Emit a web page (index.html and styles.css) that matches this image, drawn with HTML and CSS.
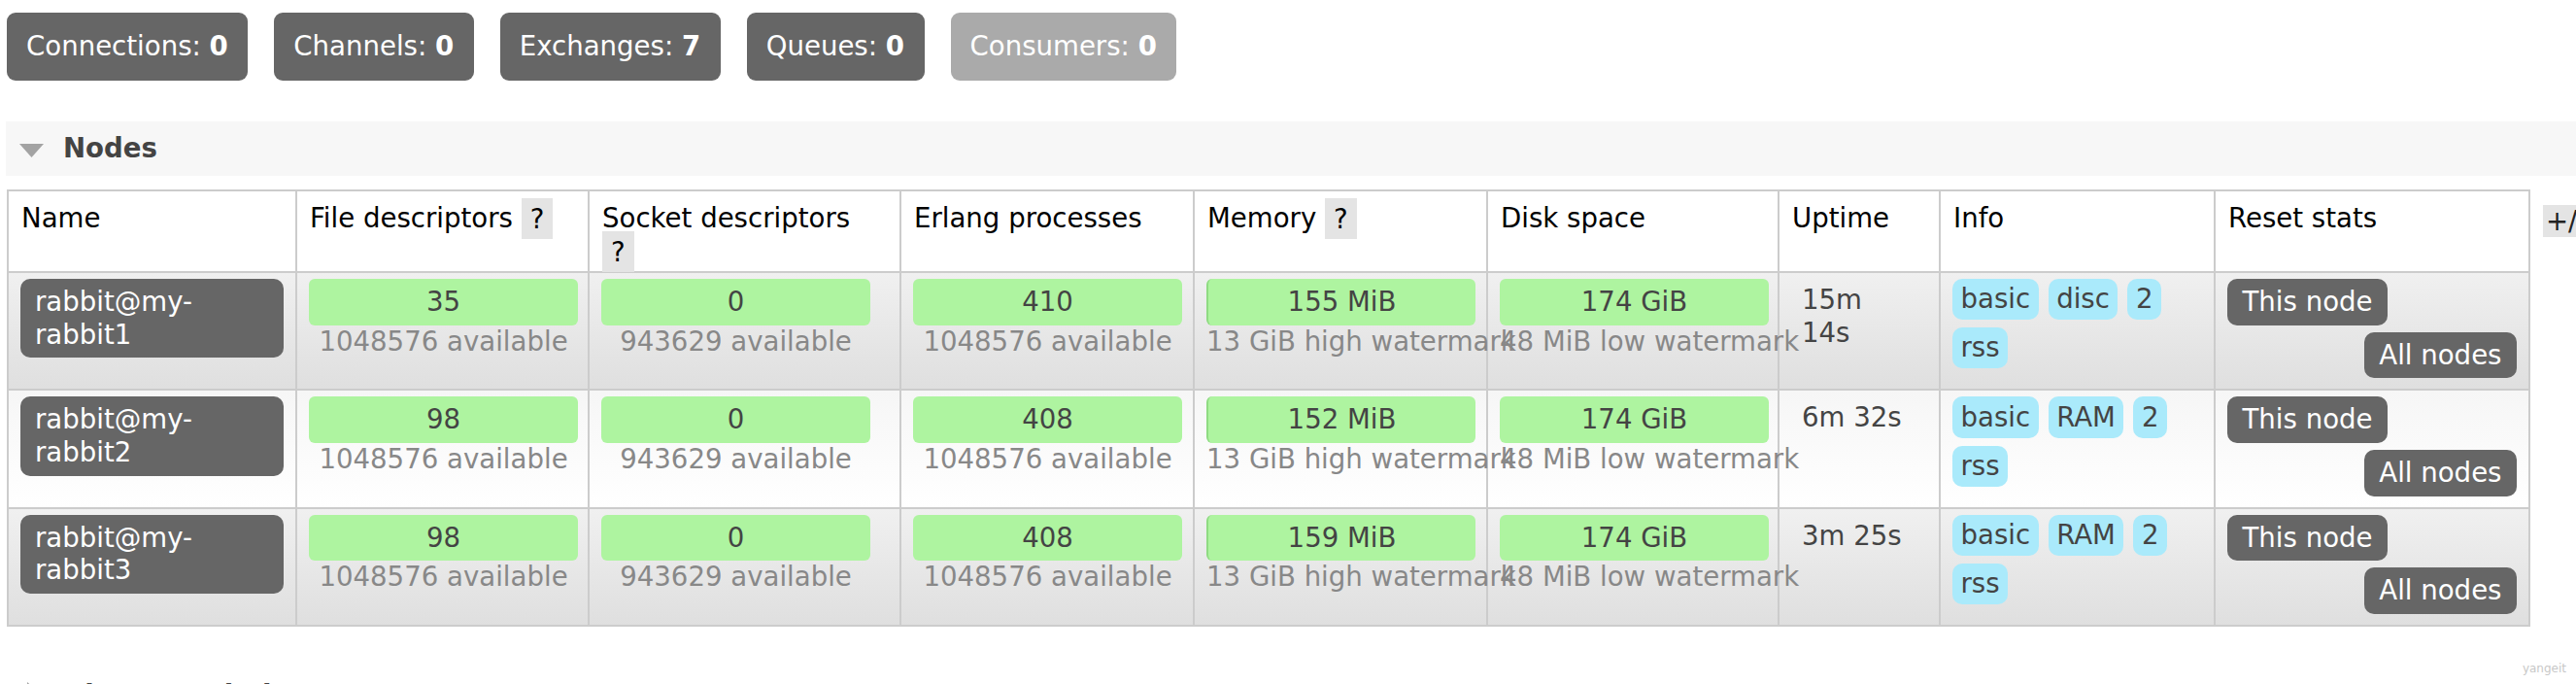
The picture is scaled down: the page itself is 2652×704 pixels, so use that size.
FILE: index.html
```html
<!DOCTYPE html>
<html lang="en">
<head>
<meta charset="utf-8">
<title>Overview - Nodes</title>
<link rel="stylesheet" href="styles.css">
</head>
<body>
<div class="page">
  <ul class="counters">
    <li class="counter">Connections: <b>0</b></li>
    <li class="counter">Channels: <b>0</b></li>
    <li class="counter">Exchanges: <b>7</b></li>
    <li class="counter">Queues: <b>0</b></li>
    <li class="counter counter-off">Consumers: <b>0</b></li>
  </ul>

  <section class="section">
    <h2 class="section-title">
      <svg class="caret" viewBox="0 0 25 14" aria-hidden="true"><polygon points="0,0 25,0 12.5,14" fill="#a3a3a3"/></svg>
      <span>Nodes</span>
    </h2>
    <div class="table-wrap">
      <table class="list">
        <colgroup>
          <col class="c-name">
          <col class="c-fd">
          <col class="c-sock">
          <col class="c-proc">
          <col class="c-mem">
          <col class="c-disk">
          <col class="c-up">
          <col class="c-info">
          <col class="c-reset">
        </colgroup>
        <thead>
          <tr>
            <th>Name</th>
            <th>File descriptors <span class="help">?</span></th>
            <th>Socket descriptors <span class="help">?</span></th>
            <th>Erlang processes</th>
            <th>Memory <span class="help">?</span></th>
            <th>Disk space</th>
            <th>Uptime</th>
            <th>Info</th>
            <th>Reset stats</th>
          </tr>
        </thead>
        <tbody>
          <tr class="row-dark">
            <td><span class="node-name">rabbit@my-rabbit1</span></td>
            <td><div class="bar"><div class="bar-fill">35</div><div class="bar-sub">1048576 available</div></div></td>
            <td><div class="bar"><div class="bar-fill">0</div><div class="bar-sub">943629 available</div></div></td>
            <td><div class="bar"><div class="bar-fill">410</div><div class="bar-sub">1048576 available</div></div></td>
            <td><div class="bar"><div class="bar-fill used">155 MiB</div><div class="bar-sub">13 GiB high watermark</div></div></td>
            <td><div class="bar"><div class="bar-fill">174 GiB</div><div class="bar-sub">48 MiB low watermark</div></div></td>
            <td class="uptime">15m 14s</td>
            <td><div class="tags"><span class="tag">basic</span><span class="tag">disc</span><span class="tag">2</span><span class="tag">rss</span></div></td>
            <td><div class="resets"><span class="btn">This node</span><span class="btn btn-all">All nodes</span></div></td>
          </tr>
          <tr class="row-light">
            <td><span class="node-name">rabbit@my-rabbit2</span></td>
            <td><div class="bar"><div class="bar-fill">98</div><div class="bar-sub">1048576 available</div></div></td>
            <td><div class="bar"><div class="bar-fill">0</div><div class="bar-sub">943629 available</div></div></td>
            <td><div class="bar"><div class="bar-fill">408</div><div class="bar-sub">1048576 available</div></div></td>
            <td><div class="bar"><div class="bar-fill used">152 MiB</div><div class="bar-sub">13 GiB high watermark</div></div></td>
            <td><div class="bar"><div class="bar-fill">174 GiB</div><div class="bar-sub">48 MiB low watermark</div></div></td>
            <td class="uptime">6m 32s</td>
            <td><div class="tags"><span class="tag">basic</span><span class="tag">RAM</span><span class="tag">2</span><span class="tag">rss</span></div></td>
            <td><div class="resets"><span class="btn">This node</span><span class="btn btn-all">All nodes</span></div></td>
          </tr>
          <tr class="row-dark">
            <td><span class="node-name">rabbit@my-rabbit3</span></td>
            <td><div class="bar"><div class="bar-fill">98</div><div class="bar-sub">1048576 available</div></div></td>
            <td><div class="bar"><div class="bar-fill">0</div><div class="bar-sub">943629 available</div></div></td>
            <td><div class="bar"><div class="bar-fill">408</div><div class="bar-sub">1048576 available</div></div></td>
            <td><div class="bar"><div class="bar-fill used">159 MiB</div><div class="bar-sub">13 GiB high watermark</div></div></td>
            <td><div class="bar"><div class="bar-fill">174 GiB</div><div class="bar-sub">48 MiB low watermark</div></div></td>
            <td class="uptime">3m 25s</td>
            <td><div class="tags"><span class="tag">basic</span><span class="tag">RAM</span><span class="tag">2</span><span class="tag">rss</span></div></td>
            <td><div class="resets"><span class="btn">This node</span><span class="btn btn-all">All nodes</span></div></td>
          </tr>
        </tbody>
      </table>
      <span class="cols-toggle">+/-</span>
    </div>
  </section>

  <section class="section section-collapsed">
    <h2 class="section-title">
      <svg class="caret caret-right" viewBox="0 0 14 25" aria-hidden="true"><polygon points="0,0 14,12.5 0,25" fill="#a3a3a3"/></svg>
      <span>Churn statistics</span>
    </h2>
  </section>

  <div class="watermark">yangeit</div>
</div>
</body>
</html>
```

FILE: styles.css
```css
html, body {
  margin: 0;
  padding: 0;
  background: #fff;
  overflow: hidden;
}

body {
  font-family: "DejaVu Sans", Verdana, sans-serif;
  font-size: 27.6px;
  line-height: 33.7px;
  color: #444;
}

.page {
  position: relative;
  height: 704px;
  box-sizing: border-box;
  padding: 13px 0 0 6px;
}

/* global counters */
.counters {
  list-style: none;
  margin: 0 0 0 1px;
  padding: 0;
  display: flex;
  gap: 27px;
}

.counter {
  background: #666;
  color: #fff;
  border-radius: 9px;
  padding: 18px 20.5px 18px 20px;
  white-space: nowrap;
}

.counter b {
  font-weight: bold;
}

.counter-off {
  background: #aaa;
}

/* sections */
.section {
  margin-top: 42px;
}

.section-title {
  margin: 0;
  font-size: 27.6px;
  line-height: 33.7px;
  font-weight: bold;
  color: #444;
  background: #f7f7f7;
  padding: 11px 0 12px 14px;
  display: flex;
  align-items: flex-start;
}

.caret {
  flex: none;
  width: 25px;
  height: 14px;
  margin: 12px 20px 0 0;
}

.section-collapsed {
  margin-top: 43px;
}

.section-collapsed .section-title {
  background: #fff;
  padding-left: 22px;
}

.caret-right {
  width: 14px;
  height: 25px;
  margin: 3px 25px 0 0;
}

/* table */
.table-wrap {
  display: flex;
  align-items: flex-start;
  margin: 14px 0 0 1px;
}

table.list {
  flex: none;
  border-collapse: collapse;
  table-layout: fixed;
  width: 2596px;
}

.c-name { width: 297px; }
.c-fd { width: 301px; }
.c-sock { width: 321px; }
.c-proc { width: 302px; }
.c-mem { width: 302px; }
.c-disk { width: 300px; }
.c-up { width: 166px; }
.c-info { width: 283px; }
.c-reset { width: 324px; }

.list th,
.list td {
  border: 2px solid #ccc;
  vertical-align: top;
  text-align: left;
}

.list th {
  font-weight: normal;
  color: #000;
  background: #fff;
  padding: 11px 13px 3px;
}

.list td {
  padding: 6px 12px 11px;
}

.row-dark td {
  background: linear-gradient(#f0f0f0, #dfdfdf);
}

.row-light td {
  background: linear-gradient(#f6f6f6, #fff);
}

.help {
  background: #e4e4e4;
  padding: 4.5px 9px;
}

.node-name {
  display: block;
  background: #666;
  color: #fff;
  border-radius: 10px;
  padding: 7px 15px;
}

/* status bars */
.bar {
  width: 277px;
}

.bar-fill {
  box-sizing: border-box;
  background: #aef4a0;
  border-radius: 6px;
  padding: 7px 0;
  text-align: center;
  color: #444;
}

.bar-fill.used {
  border-left: 2px solid #8fdb82;
}

.bar-sub {
  text-align: center;
  color: #888;
  white-space: nowrap;
}

.list td.uptime {
  padding: 11px 23px 11px;
  color: #444;
}

/* info tags */
.tags {
  display: flex;
  flex-wrap: wrap;
  gap: 8px 10px;
}

.tag {
  background: #aaeafb;
  color: #444;
  border-radius: 10px;
  padding: 4.3px 8.5px;
}

/* reset buttons */
.resets {
  display: flex;
  flex-direction: column;
  align-items: flex-start;
  gap: 7px;
}

.btn {
  background: #666;
  color: #fff;
  border-radius: 10px;
  padding: 7px 15.5px;
  white-space: nowrap;
}

.btn-all {
  align-self: flex-end;
}

.cols-toggle {
  flex: none;
  background: #e4e4e4;
  color: #222;
  margin: 16px 0 0 13px;
  padding: 0 3px;
  line-height: 33px;
  white-space: nowrap;
}

.watermark {
  position: absolute;
  right: 10px;
  bottom: 9px;
  font-size: 12px;
  line-height: 14px;
  color: #c8c8c8;
}
```
